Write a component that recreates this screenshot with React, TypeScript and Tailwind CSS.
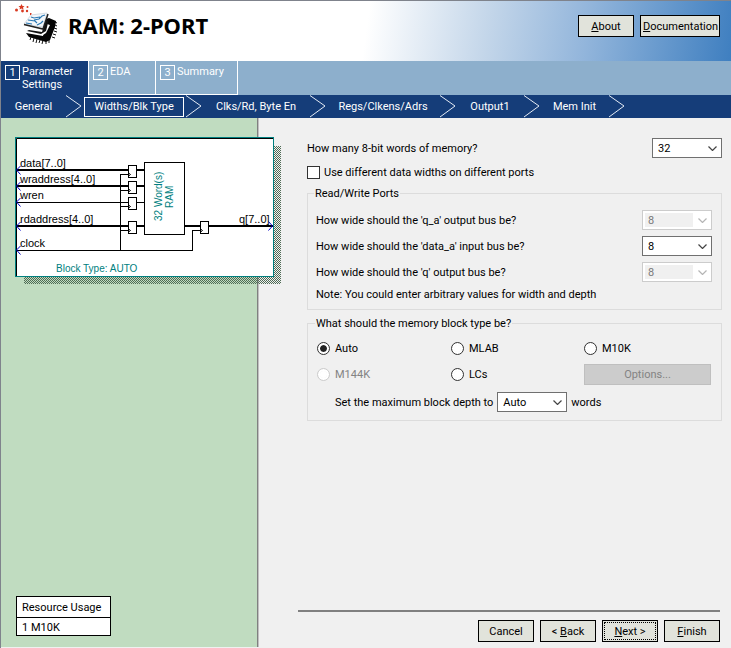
import type { ReactNode, SelectHTMLAttributes } from "react";

function Logo() {
  return (
    <svg className="h-[48px] w-[50px] shrink-0" viewBox="0 0 50 48" aria-hidden="true">
      <g fill="#d93a22">
        <path d="M9.500 1l1 2h2l-1.500 1.500 .5 2-2-1-2 1 .5-2L6.500 3h2z" />
        <circle cx="4.500" cy="7" r="1.500" />
        <circle cx="10.500" cy="8" r="1.400" />
        <circle cx="15.500" cy="4" r="1" />
        <circle cx="15" cy="8" r="1.200" />
        <rect x="18" y="10" width="1.500" height="2" />
      </g>
      <path
        d="M19 34l-1 3M22 35l-1 4M25 36l-1 4M28 37l-1 3M31 37l-1 4M34 38v3M37 37v3M40 34l3 1M41 31l3 1M42 28l3 1M42 25l3 1M43 22l2 1M43 19l2 1"
        stroke="#111"
      />
      <path d="M34 16l3-1 7 3-1 6-5 13-4 2-17-5-3-4 17 3z" fill="#050505" />
      <path d="M20 29l13-3 2-5 3 1-4 8-3 2z" fill="#fff" />
      <path d="M33 19l4-3-3 12-5 3-14-3 2-1 13 2z" fill="#111" />
      <path d="M12 21l7-9 16-2-4 14z" fill="#f4f7fa" stroke="#d5dde4" />
      <path d="M12 21.500l19 4.500 5-15" fill="none" stroke="#222" strokeWidth="1.500" />
      <path d="M14 20l6 1M16 17l7 1 2 2M19 14l3 1 6-1M22 17l5-1 3-3 3-1M25 22l4-2 2-2" fill="none" stroke="#2b79b4" strokeWidth="1.200" />
    </svg>
  );
}

function PushButton({ children, className = "w-[56px]", focused = false }: { children: ReactNode; className?: string; focused?: boolean }) {
  return (
    <button type="button" className={`flex h-[22px] shrink-0 border border-black bg-[#e1e3db] p-px ${className}`}>
      <span className={`flex flex-1 items-center justify-center self-stretch whitespace-pre border ${focused ? "border-dotted border-black" : "border-transparent"}`}>
        {children}
      </span>
    </button>
  );
}

function ComboBox({ children, disabled, ...rest }: SelectHTMLAttributes<HTMLSelectElement>) {
  return (
    <span className={`grid h-[20px] w-[70px] shrink-0 border bg-white p-[2px] ${disabled ? "border-[#cccccc]" : "border-[#707070]"}`}>
      <select
        {...rest}
        disabled={disabled}
        className="col-start-1 row-start-1 w-full appearance-none bg-transparent pl-[3px] text-black outline-none disabled:w-[48px] disabled:bg-[#f0f0f0] disabled:text-[#7a7a7a] disabled:opacity-100"
      >
        {children}
      </select>
      <svg
        className={`pointer-events-none col-start-1 row-start-1 mr-[2px] h-[5px] w-[9px] self-center justify-self-end ${disabled ? "text-[#b5b5b5]" : "text-[#444444]"}`}
        viewBox="0 0 9 5"
        aria-hidden="true"
      >
        <path d="M.5 .5l4 4 4-4" fill="none" stroke="currentColor" strokeWidth="1.200" />
      </svg>
    </span>
  );
}

function Tab({ n, children, active = false, className }: { n: number; children: ReactNode; active?: boolean; className: string }) {
  return (
    <button type="button" role="tab" aria-selected={active} className={`flex items-start gap-[2px] pl-1 pt-1 text-left text-white ${className}`}>
      <span className="flex h-[15px] w-[15px] shrink-0 items-center justify-center border border-white">{n}</span>
      <span>{children}</span>
    </button>
  );
}

function Chevron() {
  return (
    <svg className="h-[23px] w-[16px] shrink-0" viewBox="0 0 16 23" aria-hidden="true">
      <path d="M0 .5l15 10.500L0 22" fill="none" stroke="#e4ebf4" />
    </svg>
  );
}

const steps = [
  { label: "General", className: "w-[65px]" },
  { label: "Widths/Blk Type", className: "mx-[2px] h-[20px] w-[100px] border border-white" },
  { label: "Clks/Rd, Byte En", className: "w-[108px]" },
  { label: "Regs/Clkens/Adrs", className: "w-[114px]" },
  { label: "Output1", className: "w-[68px]" },
  { label: "Mem Init", className: "w-[69px]" },
];

const inputs = [
  { label: "data[7..0]", y: 33, bus: true, reg: true },
  { label: "wraddress[4..0]", y: 49, bus: true, reg: true },
  { label: "wren", y: 65, bus: false, reg: true },
  { label: "rdaddress[4..0]", y: 89, bus: true, reg: true },
  { label: "clock", y: 113, bus: false, reg: false },
];

function Register({ x, y }: { x: number; y: number }) {
  return (
    <g fill="none" stroke="#000">
      <rect x={x + 0.5} y={y - 4.5} width="8" height="12" fill="#fff" />
      <path d={`M${x} ${y + 2.500}l2.500 2-2.500 2`} />
    </g>
  );
}

function BlockDiagram() {
  return (
    <svg className="h-[147px] w-[266px] shrink-0 font-['Liberation_Sans',Arial,sans-serif] text-[11px]" viewBox="0 0 266 147" role="img" aria-label="RAM block diagram">
      <defs>
        <pattern id="dither" width="2" height="2" patternUnits="userSpaceOnUse">
          <path d="M0 0h1v1H0zM1 1h1v1H1z" fill="#4f6b55" />
        </pattern>
      </defs>
      <path d="M9 140h250V9h7v138H9z" fill="url(#dither)" shapeRendering="crispEdges" />
      <rect x=".5" y=".5" width="258" height="139" fill="#fff" stroke="#008080" />
      <path d="M1.500 139V1.500H258" fill="none" stroke="#000" />
      <g stroke="#000" fill="none" shapeRendering="crispEdges">
        {inputs.map((p) => (
          <path key={p.label} d={`M1 ${p.bus ? p.y : p.y + 0.5}H${p.reg ? 129 : 178}`} strokeWidth={p.bus ? 2 : 1} />
        ))}
        <path d="M105.500 114V37.500H113M105.500 53.500H113M105.500 69.500H113M105.500 93.500H113M177.500 114V93.500H185" />
        <path d="M169 89H258" strokeWidth="2" />
      </g>
      <rect x="129.500" y="25.500" width="40" height="72" fill="#fff" stroke="#000" />
      <Register x={113} y={33} />
      <Register x={113} y={49} />
      <Register x={113} y={65} />
      <Register x={113} y={89} />
      <Register x={185} y={89} />
      {inputs.map((p) => (
        <g key={p.label}>
          <path d={`M5.500 ${p.y - 4}L1.500 ${p.y}l4 4.500`} fill="none" stroke="#0000c8" />
          <text x="5" y={p.y - 3}>{p.label}</text>
        </g>
      ))}
      <path d="M253.500 84.500l4 4.500-4 4.500" fill="none" stroke="#0000c8" />
      <text x="224" y="86">q[7..0]</text>
      <g fill="#008080" fontSize="10">
        <text transform="translate(147 84) rotate(-90)">32 Word(s)</text>
        <text transform="translate(158 71) rotate(-90)">RAM</text>
        <text x="41" y="135">Block Type: AUTO</text>
      </g>
    </svg>
  );
}

function Radio({ label, checked = false, disabled = false }: { label: string; checked?: boolean; disabled?: boolean }) {
  return (
    <label className={`flex items-center gap-[5px] ${disabled ? "text-[#838383]" : ""}`}>
      <input
        type="radio"
        name="blockType"
        defaultChecked={checked}
        disabled={disabled}
        className="h-[13px] w-[13px] shrink-0 appearance-none rounded-full border border-[#333333] bg-white bg-clip-content p-[2px] shadow-[inset_0_0_0_2px_white] checked:bg-[#222222] disabled:border-[#cccccc]"
      />
      {label}
    </label>
  );
}

const ports = [
  { id: "qa", label: "How wide should the 'q_a' output bus be?", disabled: true },
  { id: "dataa", label: "How wide should the 'data_a' input bus be?", disabled: false },
  { id: "q", label: "How wide should the 'q' output bus be?", disabled: true },
];

export default function App() {
  return (
    <div className="flex min-h-screen flex-col border-l border-t border-[#7f838c] bg-[#f0f0f0] font-[Roboto,Tahoma,sans-serif] text-[11px] leading-[13px] text-black">
      <header className="flex h-[60px] shrink-0 items-start bg-[linear-gradient(98deg,#fff_50%,#c5d7ea_66%,#92b5db_80%,#3f7fc0_100%)] pl-[11px] pr-[11px] pt-[2px]">
        <Logo />
        <h1 className="ml-[6px] mt-[8px] flex-1 font-['Noto_Sans',Tahoma,sans-serif] text-[22px] font-bold leading-[28px]">RAM: 2-PORT</h1>
        <div className="mt-[12px] flex gap-[6px]">
          <PushButton><u>A</u>bout</PushButton>
          <PushButton className="w-[80px]"><u>D</u>ocumentation</PushButton>
        </div>
      </header>

      <div role="tablist" className="flex h-[34px] shrink-0 bg-[#8dafcc]">
        <Tab n={1} active className="w-[87px] bg-[#153d79]">Parameter<br />Settings</Tab>
        <Tab n={2} className="w-[67px] border-b border-l border-white">EDA</Tab>
        <Tab n={3} className="w-[83px] border-x border-b border-white">Summary</Tab>
      </div>

      <nav className="flex h-[23px] shrink-0 items-center bg-[#153d79] text-white">
        {steps.map((s) => (
          <div key={s.label} className="flex items-center">
            <button type="button" className={`whitespace-nowrap ${s.className}`}>{s.label}</button>
            <Chevron />
          </div>
        ))}
      </nav>

      <div className="flex flex-1 pb-px">
        <aside className="z-10 flex w-[257px] shrink-0 flex-col items-start justify-between border-r border-[#808080] bg-[#c0dcc0] pb-[11px] pl-[14px] pt-[19px] shadow-[1px_0_0_#c0c0c0]">
          <BlockDiagram />
          <table className="ml-px w-[95px] border-collapse bg-white">
            <thead>
              <tr><th className="h-[21px] whitespace-nowrap border border-black pl-[5px] text-left font-normal">Resource Usage</th></tr>
            </thead>
            <tbody>
              <tr><td className="h-[18px] border border-black pl-[5px] pt-[2px]">1 M10K</td></tr>
            </tbody>
          </table>
        </aside>

        <main className="flex flex-1 flex-col pb-[5px] pl-[40px] pr-[11px] pt-[20px]">
          <form className="-mr-[2px] flex flex-col pl-[9px]">
            <div className="flex items-center justify-between">
              <label htmlFor="words">How many 8-bit words of memory?</label>
              <ComboBox id="words"><option>32</option></ComboBox>
            </div>
            <label className="mt-[8px] flex items-center gap-1">
              <input type="checkbox" className="h-[13px] w-[13px] appearance-none border border-[#333333] bg-white checked:bg-[#333333]" />
              Use different data widths on different ports
            </label>

            <fieldset className="mt-[8px] border border-[#dcdcdc] pb-[8px] pl-[8px] pr-[9px] pt-[10px]">
              <legend className="-ml-[2px] px-px">Read/Write Ports</legend>
              <div className="flex flex-col gap-[6px]">
                {ports.map((p) => (
                  <div key={p.id} className="flex items-center justify-between">
                    <label htmlFor={p.id}>{p.label}</label>
                    <ComboBox id={p.id} disabled={p.disabled}><option>8</option></ComboBox>
                  </div>
                ))}
                <p>Note: You could enter arbitrary values for width and depth</p>
              </div>
            </fieldset>

            <fieldset className="mt-[7px] border border-[#dcdcdc] pb-[8px] pl-[9px] pr-[10px] pt-[8px]">
              <legend className="-ml-[2px] px-px">What should the memory block type be?</legend>
              <div className="grid auto-rows-[21px] grid-cols-[134px_133px_1fr] gap-y-[5px]">
                <Radio label="Auto" checked />
                <Radio label="MLAB" />
                <Radio label="M10K" />
                <Radio label="M144K" disabled />
                <Radio label="LCs" />
                <button type="button" disabled className="border border-[#bfbfbf] bg-[#cccccc] text-[#838383]">Options...</button>
              </div>
              <div className="mt-[7px] flex items-center gap-1 pl-[18px]">
                <label htmlFor="depth">Set the maximum block depth to</label>
                <ComboBox id="depth"><option>Auto</option></ComboBox>
                <span>words</span>
              </div>
            </fieldset>
          </form>

          <footer className="mt-auto flex justify-end gap-[6px] border-t-2 border-[#808080] pt-[8px]">
            <PushButton>Cancel</PushButton>
            <PushButton>{"< "}<u>B</u>ack</PushButton>
            <PushButton focused><u>N</u>{"ext >"}</PushButton>
            <PushButton><u>F</u>inish</PushButton>
          </footer>
        </main>
      </div>
    </div>
  );
}
